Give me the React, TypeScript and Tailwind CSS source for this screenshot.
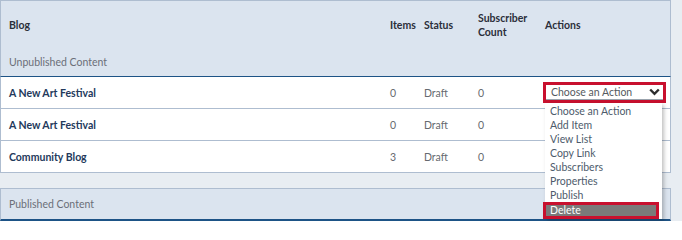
import React from "react";

const rows = [
  { name: "A New Art Festival", items: "0", status: "Draft", subs: "0", action: true },
  { name: "A New Art Festival", items: "0", status: "Draft", subs: "0" },
  { name: "Community Blog", items: "3", status: "Draft", subs: "0" },
];

const options = [
  "Choose an Action",
  "Add Item",
  "View List",
  "Copy Link",
  "Subscribers",
  "Properties",
  "Publish",
];

function Chevron() {
  return (
    <svg width="11" height="8" viewBox="0 0 11 8" className="block">
      <path d="M1.2 1.5 L5.5 5.8 L9.8 1.5" fill="none" stroke="#2d2d2d" strokeWidth="2.4" />
    </svg>
  );
}

function ActionSelect() {
  return (
    <div className="relative ml-[-2px] mt-[5px] w-[123px]">
      <div className="h-[21px] border-[3px] border-[#c8102e] bg-white">
        <div className="flex h-full items-center justify-between border-b border-[#9aa3ad] pl-[5px] pr-[3px] text-[10.5px] leading-none text-[#555a60]">
          <span>Choose an Action</span>
          <Chevron />
        </div>
      </div>
      <div className="absolute left-[2px] top-[21px] z-10 w-[117px] bg-white pt-[1px] shadow-[2px_2px_4px_rgba(0,0,0,0.25)]">
        {options.map((o) => (
          <div key={o} className="h-[14px] pl-[5px] text-[10.5px] leading-[14px] text-[#4d5b6b]">
            {o}
          </div>
        ))}
        <div className="ml-[-2px] w-[116px] border-[3px] border-[#c8102e] bg-[#7a7a7a]">
          <div className="h-[11px] pl-[4px] text-[10.5px] leading-[11px] text-white">Delete</div>
        </div>
      </div>
    </div>
  );
}

export default function App() {
  return (
    <div
      className="h-[221px] w-[682px] overflow-hidden bg-[#e8edf2]"
      style={{ fontFamily: "Lato, 'Open Sans', sans-serif" }}
    >
      <div className="w-[671px]">
        <div className="border border-[#aebdd0] border-b-0 bg-[#dbe4ef]">
          <div className="grid h-[47px] grid-cols-[389px_34px_54px_67px_1fr] items-center text-[10.5px] font-bold leading-[14px] text-[#2b2f3a]">
            <div className="pl-[8px]">Blog</div>
            <div>Items</div>
            <div>Status</div>
            <div>
              Subscriber
              <br />
              Count
            </div>
            <div>Actions</div>
          </div>
          <div className="flex h-[28px] items-center pl-[8px] pt-[2px] text-[10.5px] text-[#6b6f78]">
            Unpublished Content
          </div>
        </div>
        <div className="border-l border-r border-[#aebdd0] border-t border-t-[#1d5386] bg-white">
          {rows.map((r, i) => (
            <div
              key={i}
              className="grid h-[32px] grid-cols-[389px_34px_54px_67px_1fr] border-b border-[#aebdd0] text-[10.5px] leading-[14px]"
            >
              <div className="flex items-center pl-[8px] font-bold text-[#23395b]">{r.name}</div>
              <div className="flex items-center text-[#666a70]">{r.items}</div>
              <div className="flex items-center text-[#666a70]">{r.status}</div>
              <div className="flex items-center text-[#666a70]">{r.subs}</div>
              <div>{r.action ? <ActionSelect /> : null}</div>
            </div>
          ))}
        </div>
        <div className="h-[15px]" />
        <div className="flex h-[33px] items-center border border-[#aebdd0] border-b-2 border-b-[#1d5386] bg-[#dbe4ef] pl-[8px] pt-[2px] text-[10.5px] text-[#6b6f78]">
          Published Content
        </div>
      </div>
    </div>
  );
}
